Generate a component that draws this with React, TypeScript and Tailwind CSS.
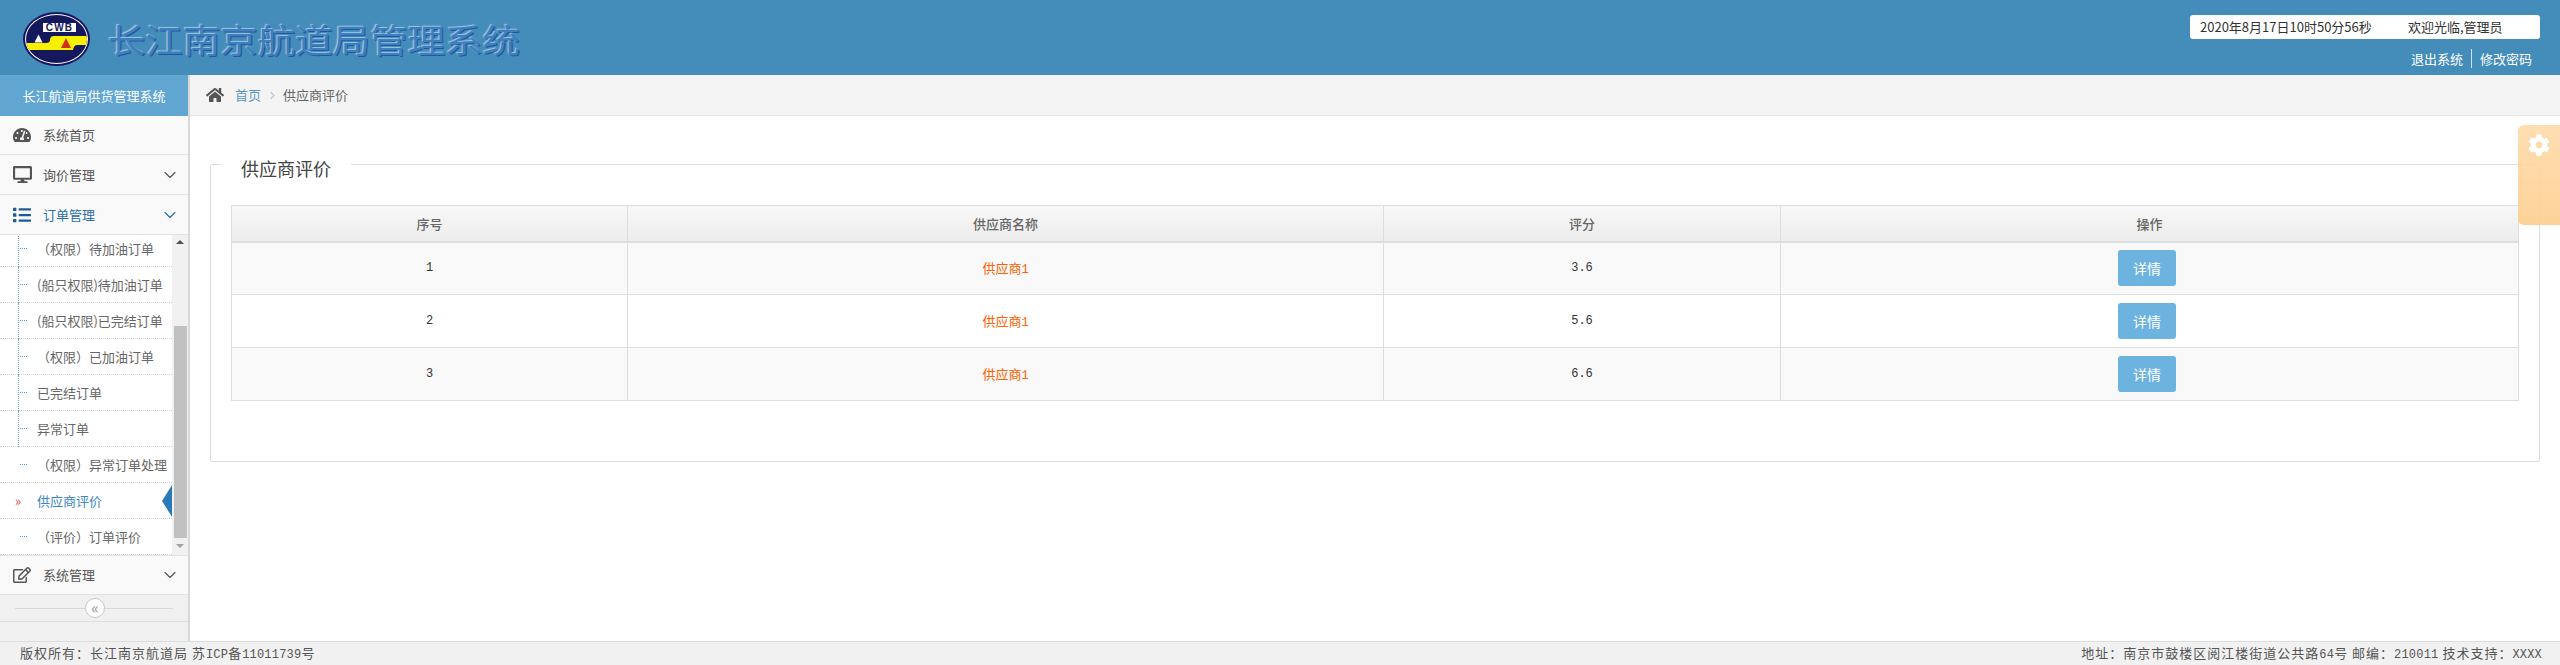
import { ChevronDown } from "lucide-react"
import { FaChevronRight, FaCog, FaRegEdit, FaHome, FaTachometerAlt, FaDesktop, FaList } from "react-icons/fa"

const cjk = "font-['Noto_Sans_CJK_SC','Noto_Sans',sans-serif]"

const subItems: { label: string; vline?: boolean; active?: boolean }[] = [
  { label: "（权限）待加油订单", vline: true },
  { label: "(船只权限)待加油订单", vline: true },
  { label: "(船只权限)已完结订单", vline: true },
  { label: "（权限）已加油订单", vline: true },
  { label: "已完结订单", vline: true },
  { label: "异常订单", vline: true },
  { label: "（权限）异常订单处理" },
  { label: "供应商评价", active: true },
  { label: "（评价）订单评价" }
]

const rows = [
  { id: "1", name: "供应商", score: "3.6" },
  { id: "2", name: "供应商", score: "5.6" },
  { id: "3", name: "供应商", score: "6.6" }
]

const Mono = ({ children }: { children: string }) => (
  <span className="font-['Liberation_Mono',monospace] text-[12px] tracking-[0.2px]">{children}</span>
)

const Logo = () => (
  <svg width="67" height="54" viewBox="0 0 67 54" className="shrink-0">
    <defs>
      <clipPath id="logo-inner">
        <ellipse cx="33.5" cy="27" rx="30.5" ry="24" />
      </clipPath>
    </defs>
    <ellipse cx="33.5" cy="27" rx="33.5" ry="27" fill="#16185e" />
    <ellipse cx="33.5" cy="27" rx="31.5" ry="25" fill="#fff" />
    <ellipse cx="33.5" cy="27" rx="30.5" ry="24" fill="#16185e" />
    <g clipPath="url(#logo-inner)">
      <path d="M0 31 H23 Q27 31 27 28 Q27 24 31 24 H67 V33 H54 Q51 33 50 38 H0 Z" fill="#f7f000" />
    </g>
    <rect x="20" y="11" width="33" height="9" fill="#fff" />
    <text x="36.5" y="19" textAnchor="middle" fontSize="10" fontWeight="700" letterSpacing="1.2" fill="#16185e" fontFamily="'Liberation Sans',sans-serif">CWB</text>
    <path d="M11.5 30.5 L15.5 22.5 L19.5 30.5 Z" fill="#fff" />
    <path d="M38 36 L43 26 L48 36 Z" fill="#d0301c" />
  </svg>
)

const MenuRow = ({ icon, label, chevron, active, height = "h-10" }: { icon: React.ReactNode; label: string; chevron?: boolean; active?: boolean; height?: string }) => (
  <div className={`flex ${height} items-center border-b border-[#e2e2e2] bg-[#f9f9f9] pr-[8px] pl-[13px] text-[13px] ${active ? "text-[#2a6ea8]" : "text-[#555]"}`}>
    <span className="flex w-[30px] shrink-0 items-center text-[#555]">{icon}</span>
    <span className="flex-1">{label}</span>
    {chevron && <ChevronDown size={20} strokeWidth={1.4} />}
  </div>
)

const SubRow = ({ label, vline, active }: { label: string; vline?: boolean; active?: boolean }) => (
  <div className="relative flex h-9 items-center border-b border-dotted border-[#cfcfcf] pl-[37px] text-[13px] text-[#666] first:-mt-1">
    {vline && <span className="absolute top-0 -bottom-px left-[18px] border-l border-dotted border-[#5fa6d1]" />}
    {active ? (
      <span className="absolute left-[15px] text-[13px] leading-none text-[#d9534f]">»</span>
    ) : (
      <span className="absolute left-[20px] w-[7px] border-t border-dotted border-[#5b9bd1]" />
    )}
    <span className={active ? "text-[#3b86c4]" : ""}>{label}</span>
    {active && <span className="absolute right-0 h-0 w-0 border-y-[16px] border-r-[10px] border-y-transparent border-r-[#2a7ab8]" />}
  </div>
)

const Sidebar = () => (
  <aside className="flex w-[190px] shrink-0 flex-col border-r-2 border-[#d8d8d8] bg-[#f0f0f0]">
    <div className="flex h-[41px] items-center justify-center bg-[#60a6d1] text-[13px] text-white">长江航道局供货管理系统</div>
    <MenuRow icon={<FaTachometerAlt size={18} />} label="系统首页" height="h-[39px]" />
    <MenuRow icon={<FaDesktop size={19} />} label="询价管理" chevron />
    <MenuRow icon={<FaList size={18} className="text-[#1f5a9c]" />} label="订单管理" chevron active />
    <div className="relative h-[321px] overflow-hidden border-b border-[#e2e2e2] bg-white">
      <div className="w-[172px]">
        {subItems.map((item) => (
          <SubRow key={item.label} {...item} />
        ))}
      </div>
      <div className="absolute top-0 right-0 bottom-0 w-[16px] bg-[#f1f1f1]">
        <div className="absolute top-[5px] left-[4px] h-0 w-0 border-x-4 border-b-4 border-x-transparent border-b-[#505050]" />
        <div className="absolute top-[91px] left-[2px] h-[212px] w-[13px] bg-[#c1c1c1]" />
        <div className="absolute bottom-[7px] left-[4px] h-0 w-0 border-x-4 border-t-4 border-x-transparent border-t-[#a3a3a3]" />
      </div>
    </div>
    <MenuRow icon={<FaRegEdit size={18} />} label="系统管理" chevron height="h-[39px]" />
    <div className="relative flex h-[27px] items-center border-b border-[#dedede] px-[15px]">
      <div className="h-px flex-1 bg-[#d8d8d8]" />
      <div className="absolute left-[85px] flex h-5 w-5 items-center justify-center rounded-full border border-[#c8c8c8] bg-white pb-[2px] text-[16px] leading-none text-[#999]">«</div>
    </div>
  </aside>
)

const Panel = () => (
  <div className="mx-[20px] mt-[48px] h-[298px] rounded-[2px] border border-[#dddddd] px-[20px]">
    <div className="-mt-[9px] -ml-[10px] w-fit bg-white px-[20px] text-[18px] leading-[24px] text-[#444]">供应商评价</div>
    <table className="mt-[25px] w-full table-fixed border-collapse border border-[#dddddd] text-[13px]">
      <thead>
        <tr className="h-[36px] bg-gradient-to-b from-[#f8f8f8] to-[#ececec] text-[#666]">
          <th className="w-[396px] border-r border-b-2 border-[#dddddd] font-medium">序号</th>
          <th className="w-[756px] border-r border-b-2 border-[#dddddd] font-medium">供应商名称</th>
          <th className="w-[397px] border-r border-b-2 border-[#dddddd] font-medium">评分</th>
          <th className="border-b-2 border-[#dddddd] font-medium">操作</th>
        </tr>
      </thead>
      <tbody>
        {rows.map((row) => (
          <tr key={row.id} className="h-[53px] border-b border-[#dddddd] odd:bg-[#f9f9f9]">
            <td className="border-r border-[#dddddd] text-center font-['Liberation_Mono',monospace] text-[12px] text-[#333]">{row.id}</td>
            <td className="border-r border-[#dddddd] text-center text-[#ff6000]">
              {row.name}
              <span className="font-['Liberation_Mono',monospace] text-[12px]">1</span>
            </td>
            <td className="border-r border-[#dddddd] text-center font-['Liberation_Mono',monospace] text-[12px] text-[#333]">{row.score}</td>
            <td className="text-center">
              <button className="mr-[5px] h-9 w-[58px] rounded-[3px] bg-[#6db3e0] text-[14px] text-white">详情</button>
            </td>
          </tr>
        ))}
      </tbody>
    </table>
  </div>
)

const App = () => (
  <div className={`relative flex h-[665px] w-[2560px] flex-col overflow-hidden bg-white ${cjk}`}>
    <header className="flex h-[75px] shrink-0 items-center justify-between bg-[#448cb9] pr-[20px] pl-[23px]">
      <div className="flex items-center gap-[18px] pt-[3px]">
        <Logo />
        <span className="origin-left scale-x-[1.135] text-[33px] leading-none text-[#3f7fbe] [text-shadow:-1px_-1px_1px_#9cc7e2,1px_1px_0_#1f5aa0]">长江南京航道局管理系统</span>
      </div>
      <div className="flex flex-col items-end self-start pt-[15px]">
        <div className="flex h-6 w-[350px] items-center rounded-[3px] bg-white pl-[10px] text-[13px] text-[#333]">
          <span className="w-[208px]">2020年8月17日10时50分56秒</span>
          <span>欢迎光临,管理员</span>
        </div>
        <div className="mt-[10px] mr-[8px] flex h-[19px] items-center text-[13px] text-white">
          <span className="pr-2">退出系统</span>
          <span className="border-l border-[#cfe3f0] pl-2">修改密码</span>
        </div>
      </div>
    </header>
    <div className="flex min-h-0 flex-1">
      <Sidebar />
      <main className="min-w-0 flex-1">
        <div className="flex h-[41px] items-center border-b border-[#e4e4e4] bg-[#f4f4f4] pl-[16px] text-[13px]">
          <FaHome size={18} className="text-[#555]" />
          <span className="ml-[11px] text-[#5a97c4]">首页</span>
          <FaChevronRight size={9} className="mx-[7px] text-[#c5c9d0]" />
          <span className="ml-[-1px] text-[#666]">供应商评价</span>
        </div>
        <Panel />
      </main>
    </div>
    <footer className="flex h-[24px] shrink-0 items-center justify-between border-t border-[#dddddd] bg-[#f1f1f1] pr-[18px] pl-[20px] text-[13px] tracking-[1px] text-[#555]">
      <span>
        版权所有：长江南京航道局 苏<Mono>ICP</Mono>备<Mono>11011739</Mono>号
      </span>
      <span>
        地址：南京市鼓楼区阅江楼街道公共路<Mono>64</Mono>号 邮编：<Mono>210011</Mono> 技术支持：<Mono>XXXX</Mono>
      </span>
    </footer>
    <div className="absolute top-[125px] right-0 flex h-[100px] w-[42px] justify-center rounded-l-[6px] bg-gradient-to-b from-[#fedbaa] to-[#fdce8e] pt-[9px] opacity-90">
      <FaCog size={22} className="text-white" />
    </div>
  </div>
)

export default App
